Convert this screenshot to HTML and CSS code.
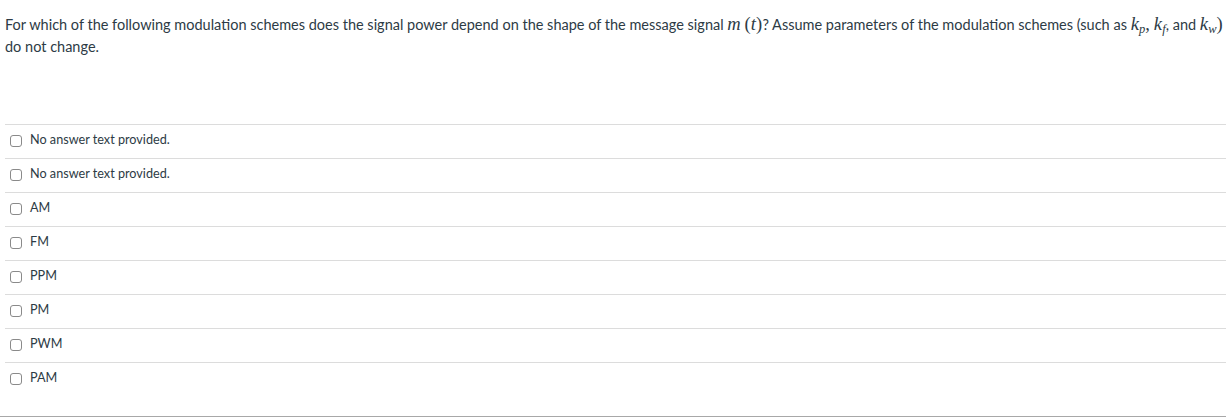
FILE: index.html
```html
<!DOCTYPE html>
<html>
<head>
<meta charset="utf-8">
<link rel="stylesheet" href="styles.css">
</head>
<body>
<div class="quiz">
  <div class="question">For which of the following modulation schemes does the signal power depend on the shape of the message signal <span class="math"><i>m</i>&#8201;(<i>t</i>)</span>? Assume parameters of the modulation schemes (such as <span class="math"><i>k</i><sub><i>p</i></sub>,&#8201;<i>k</i><sub><i>f</i></sub></span>, and <span class="math"><i>k</i><sub><i>w</i></sub>)</span><br>do not change.</div>
  <div class="answers">
    <label class="answer"><span class="box"></span><span class="label">No answer text provided.</span></label>
    <label class="answer"><span class="box"></span><span class="label">No answer text provided.</span></label>
    <label class="answer"><span class="box"></span><span class="label">AM</span></label>
    <label class="answer"><span class="box"></span><span class="label">FM</span></label>
    <label class="answer"><span class="box"></span><span class="label">PPM</span></label>
    <label class="answer"><span class="box"></span><span class="label">PM</span></label>
    <label class="answer"><span class="box"></span><span class="label">PWM</span></label>
    <label class="answer"><span class="box"></span><span class="label">PAM</span></label>
  </div>
</div>
</body>
</html>
```
FILE: styles.css
```css
html, body {
  margin: 0;
  padding: 0;
  background: #fff;
}
body {
  font-family: Lato, "Open Sans", sans-serif;
  color: #2d3b45;
}
.quiz {
  width: 1226px;
  height: 416px;
  border-bottom: 1px solid #a8a8a8;
}
.question {
  padding: 14px 0 0 5px;
  font-size: 14.5px;
  line-height: 22px;
  height: 44px;
  white-space: nowrap;
}
.math {
  font-family: "Liberation Serif", "DejaVu Serif", serif;
  font-size: 18.5px;
  letter-spacing: 0.1px;
  white-space: nowrap;
  line-height: 0;
}
.math sub {
  font-size: 12.5px;
  line-height: 0;
  vertical-align: -3px;
}
.answers {
  margin: 66px 0 0 5px;
}
.answer {
  display: flex;
  align-items: flex-start;
  height: 33px;
  border-top: 1px solid #dcdcdc;
  font-size: 12.65px;
}
.box {
  width: 10px;
  height: 10px;
  border: 1px solid #8a8a8a;
  border-radius: 3px;
  margin: 10px 8px 0 5px;
  flex: none;
}
.label {
  line-height: 16px;
  padding-top: 7px;
}
```
